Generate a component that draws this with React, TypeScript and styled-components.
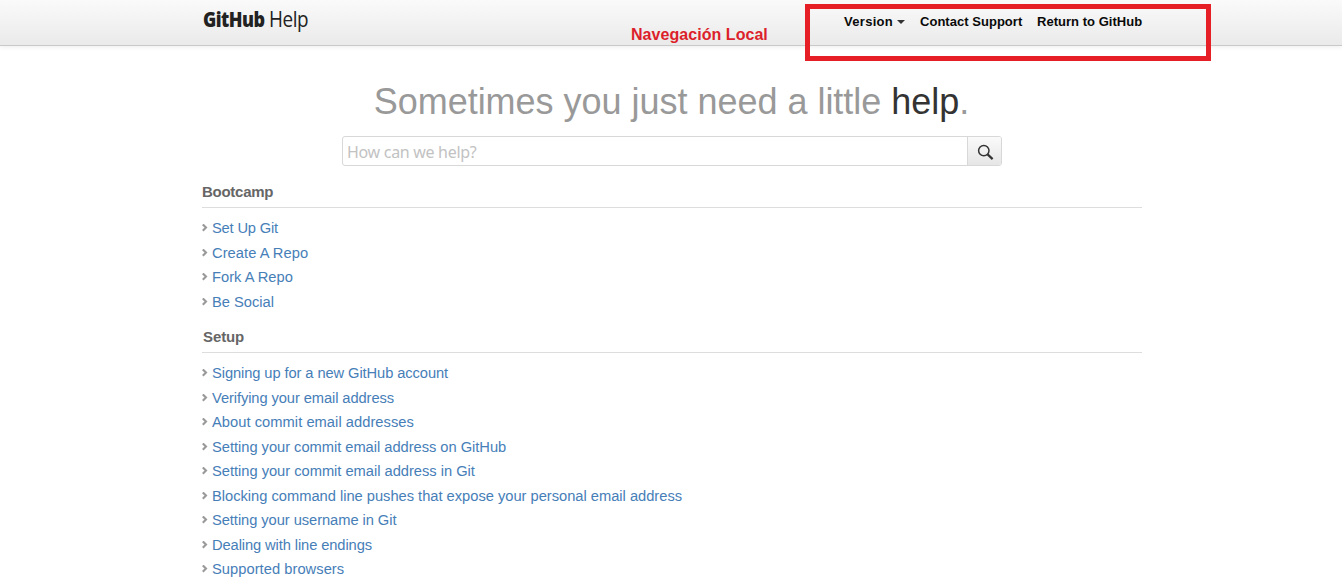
import React from "react";
import styled, { createGlobalStyle } from "styled-components";

const GlobalStyle = createGlobalStyle`
  * { box-sizing: border-box; }
  html, body { margin: 0; height: 578px; overflow: hidden; background: #fff; }
  body { font-family: "Liberation Sans", Arial, sans-serif; color: #333; }
`;

const Page = styled.div`
  position: relative;
  width: 1342px;
  height: 578px;
  overflow: hidden;
`;

const Header = styled.header`
  height: 46px;
  padding: 0 200px 0 203px;
  display: flex;
  justify-content: space-between;
  background: linear-gradient(#fafafa, #eaeaea);
  border-bottom: 1px solid #c9c9c9;
  box-shadow: 0 1px 5px rgba(0, 0, 0, 0.08);
`;

const Logo = styled.a`
  display: flex;
  padding-top: 5px;
  height: 34px;
  font: 400 21px/29px "Open Sans", sans-serif;
  color: #222;
`;

const LogoStrong = styled.span`
  width: 66px;
  font-weight: 800;
  letter-spacing: -0.6px;
  white-space: nowrap;
  transform: scaleX(0.855);
  transform-origin: 0 0;
`;

const LogoLight = styled.span`
  letter-spacing: -0.5px;
  transform: scaleX(0.9);
  transform-origin: 0 0;
`;

const Nav = styled.nav`
  display: flex;
  padding-top: 14px;
`;

const NavLink = styled.a<{ $width: number; $spacing?: number }>`
  display: flex;
  align-items: center;
  width: ${(p) => p.$width}px;
  height: 15px;
  font-size: 13px;
  line-height: 15px;
  font-weight: bold;
  letter-spacing: ${(p) => p.$spacing ?? 0.03}px;
  white-space: nowrap;
  color: #0a0a0a;
`;

const Caret = styled.span`
  margin: 1px 0 0 4px;
  border: 4px solid transparent;
  border-top-color: #333;
  border-bottom: 0;
`;

const Note = styled.div`
  position: absolute;
  left: 631px;
  top: 26px;
  font-size: 16px;
  line-height: 18px;
  font-weight: bold;
  letter-spacing: 0.05px;
  color: #dc1f2b;
  white-space: nowrap;
`;

const Frame = styled.div`
  position: absolute;
  left: 805px;
  top: 4px;
  width: 406px;
  height: 57px;
  border: 5px solid #e61e25;
`;

const Main = styled.main`
  width: 940px;
  margin-left: 202px;
`;

const Headline = styled.h1`
  margin: 0;
  padding: 35px 0 0 171.7px;
  height: 90px;
  font-size: 36px;
  line-height: 42px;
  font-weight: 400;
  letter-spacing: -0.02px;
  white-space: nowrap;
  color: #999;
`;

const Dark = styled.span`
  color: #333;
`;

const Search = styled.form`
  display: flex;
  width: 660px;
  height: 30px;
  margin-left: 140px;
  border: 1px solid #d8d8d8;
  border-radius: 3px;
  overflow: hidden;
`;

const Field = styled.div`
  flex: 1;
  padding: 2px 0 0 4px;
  font: 400 16px/26px "Noto Sans", sans-serif;
  letter-spacing: -0.3px;
  color: #c2c2c2;
`;

const SearchButton = styled.button`
  width: 34px;
  padding: 0;
  display: flex;
  align-items: center;
  justify-content: center;
  border: 0;
  border-left: 1px solid #d8d8d8;
  background: linear-gradient(#fafafa, #e6e6e6);
`;

const Section = styled.section`
  height: 145px;
`;

const SectionTitle = styled.h2<{ $spacing: number; $indent: number }>`
  margin: 0;
  height: 42px;
  padding: 17px 0 0 ${(p) => p.$indent}px;
  border-bottom: 1px solid #ddd;
  font-size: 15px;
  line-height: 17px;
  font-weight: bold;
  letter-spacing: ${(p) => p.$spacing}px;
  color: #666;
`;

const List = styled.ul`
  list-style: none;
  margin: 0;
  padding: 8px 0 0;
`;

const Item = styled.li<{ $spacing: number }>`
  display: flex;
  align-items: center;
  gap: 4px;
  height: 24.5px;
  font-size: 14.7px;
  line-height: 24px;
  letter-spacing: ${(p) => p.$spacing}px;
  white-space: nowrap;
  color: #467eb8;
`;

const Chevron = () => (
  <svg width="6" height="8" viewBox="0 0 6 8">
    <path d="M0.8 0.4L4 3.6L0.8 6.8" fill="none" stroke="#999" strokeWidth="2.1" />
  </svg>
);

type Link = [label: string, spacing: number];

const sections: { title: string; spacing: number; indent: number; items: Link[] }[] = [
  {
    title: "Bootcamp",
    spacing: -0.27,
    indent: 0,
    items: [
      ["Set Up Git", -0.18],
      ["Create A Repo", 0.05],
      ["Fork A Repo", 0],
      ["Be Social", 0],
    ],
  },
  {
    title: "Setup",
    spacing: -0.1,
    indent: 1,
    items: [
      ["Signing up for a new GitHub account", -0.09],
      ["Verifying your email address", -0.09],
      ["About commit email addresses", 0.04],
      ["Setting your commit email address on GitHub", -0.03],
      ["Setting your commit email address in Git", -0.02],
      ["Blocking command line pushes that expose your personal email address", -0.015],
      ["Setting your username in Git", -0.06],
      ["Dealing with line endings", -0.1],
      ["Supported browsers", 0.04],
    ],
  },
];

export default function App() {
  return (
    <Page>
      <GlobalStyle />
      <Header>
        <Logo>
          <LogoStrong>GitHub</LogoStrong>
          <LogoLight>Help</LogoLight>
        </Logo>
        <Nav>
          <NavLink $width={76} $spacing={0.3}>
            Version
            <Caret />
          </NavLink>
          <NavLink $width={117}>Contact Support</NavLink>
          <NavLink $width={105}>Return to GitHub</NavLink>
        </Nav>
      </Header>
      <Note>Navegación Local</Note>
      <Frame />
      <Main>
        <Headline>
          Sometimes you just need a little <Dark>help</Dark>.
        </Headline>
        <Search>
          <Field>How can we help?</Field>
          <SearchButton type="button" aria-label="Search">
            <svg width="19" height="18" viewBox="0 0 19 18" fill="none" stroke="#333">
              <circle cx="8.8" cy="8.6" r="5.2" strokeWidth="1.5" />
              <path d="M12.6 12.4L17.6 17.1" strokeWidth="2.2" />
            </svg>
          </SearchButton>
        </Search>
        {sections.map((s) => (
          <Section key={s.title}>
            <SectionTitle $spacing={s.spacing} $indent={s.indent}>
              {s.title}
            </SectionTitle>
            <List>
              {s.items.map(([label, spacing]) => (
                <Item key={label} $spacing={spacing}>
                  <Chevron />
                  {label}
                </Item>
              ))}
            </List>
          </Section>
        ))}
      </Main>
    </Page>
  );
}
